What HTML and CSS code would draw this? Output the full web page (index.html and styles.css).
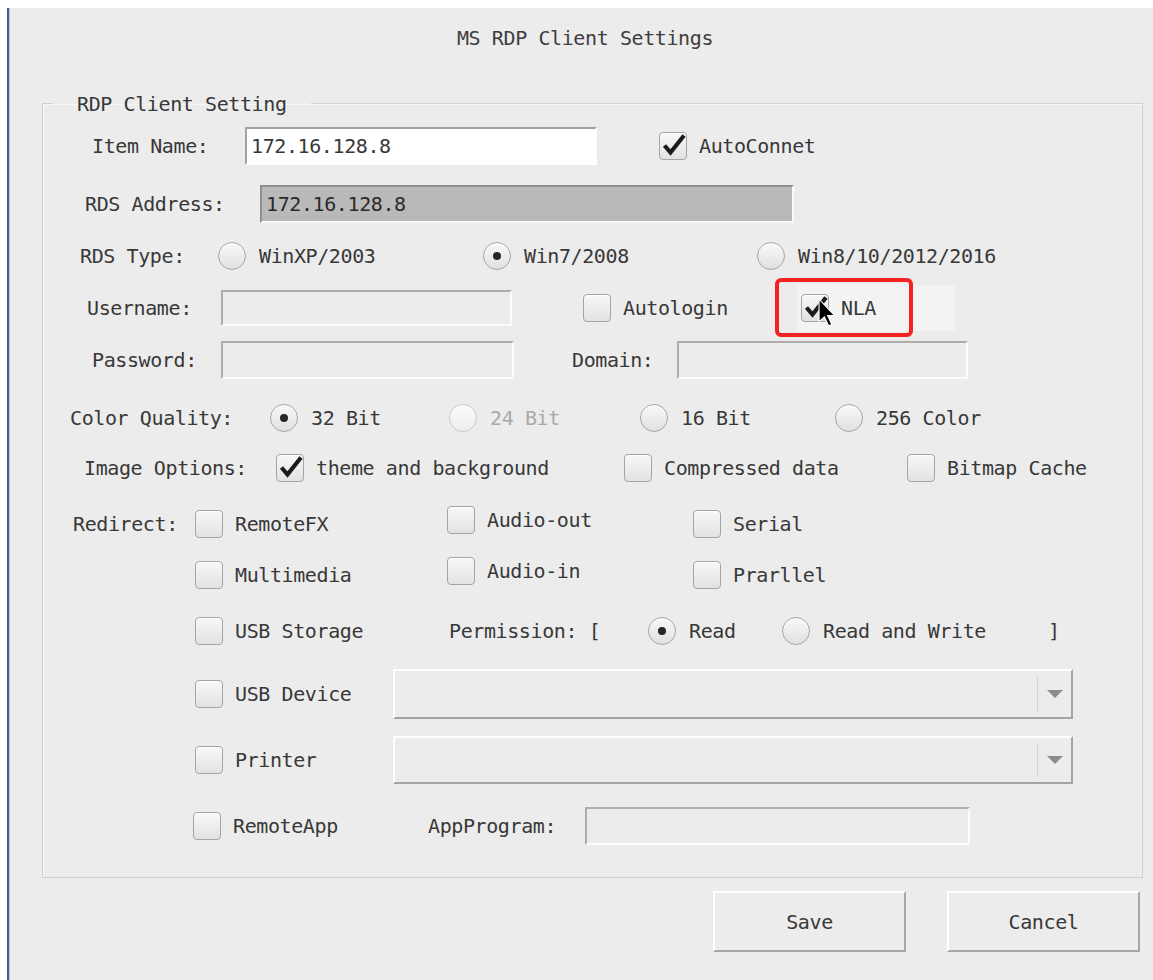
FILE: index.html
```html
<!DOCTYPE html>
<html lang="en">
<head>
<meta charset="utf-8">
<title>MS RDP Client Settings</title>
<link rel="stylesheet" href="styles.css">
</head>
<body>
<div class="window">
  <div class="title">MS RDP Client Settings</div>

  <fieldset class="group">
    <legend>RDP Client Setting</legend>
    <div class="form">

      <div class="row row-name">
        <span>Item Name:</span>
        <div class="entry entry-name">172.16.128.8</div>
        <label class="check"><span class="box"><svg viewBox="0 0 28 28"><path d="M5.5 13.5 L11.5 20.5 L25 3.5" /></svg></span>AutoConnet</label>
      </div>

      <div class="row row-address">
        <span>RDS Address:</span>
        <div class="entry entry-address">172.16.128.8</div>
      </div>

      <div class="row row-type">
        <span>RDS Type:</span>
        <label class="radio"><span class="dot"></span>WinXP/2003</label>
        <label class="radio"><span class="dot on"></span>Win7/2008</label>
        <label class="radio"><span class="dot"></span>Win8/10/2012/2016</label>
      </div>

      <div class="row row-user">
        <span>Username:</span>
        <div class="entry entry-plain entry-user"></div>
        <label class="check"><span class="box"></span>Autologin</label>
        <div class="nla">
          <label class="check prelight"><span class="box"><svg viewBox="0 0 28 28"><path d="M5.5 13.5 L11.5 20.5 L25 3.5" /></svg></span>NLA</label>
          <span class="mark"></span>
          <svg class="cursor" viewBox="0 0 16 27"><path d="M1 1 L1 22 L6 17.5 L10 26 L13 24.7 L9 16.3 L15.5 16.3 Z" /></svg>
        </div>
      </div>

      <div class="row row-pass">
        <span>Password:</span>
        <div class="entry entry-plain entry-pass"></div>
        <span>Domain:</span>
        <div class="entry entry-plain entry-domain"></div>
      </div>

      <div class="row row-color">
        <span>Color Quality:</span>
        <label class="radio"><span class="dot on"></span>32 Bit</label>
        <label class="radio disabled"><span class="dot"></span>24 Bit</label>
        <label class="radio"><span class="dot"></span>16 Bit</label>
        <label class="radio"><span class="dot"></span>256 Color</label>
      </div>

      <div class="row row-image">
        <span>Image Options:</span>
        <label class="check"><span class="box"><svg viewBox="0 0 28 28"><path d="M5.5 13.5 L11.5 20.5 L25 3.5" /></svg></span>theme and background</label>
        <label class="check"><span class="box"></span>Compressed data</label>
        <label class="check"><span class="box"></span>Bitmap Cache</label>
      </div>

      <div class="row row-redirect">
        <span>Redirect:</span>
        <label class="check"><span class="box"></span>RemoteFX</label>
        <label class="check lift"><span class="box"></span>Audio-out</label>
        <label class="check"><span class="box"></span>Serial</label>
      </div>

      <div class="row row-redirect-more">
        <label class="check"><span class="box"></span>Multimedia</label>
        <label class="check lift"><span class="box"></span>Audio-in</label>
        <label class="check"><span class="box"></span>Prarllel</label>
      </div>

      <div class="row row-storage">
        <label class="check"><span class="box"></span>USB Storage</label>
        <span>Permission: [</span>
        <label class="radio"><span class="dot on"></span>Read</label>
        <label class="radio"><span class="dot"></span>Read and Write</label>
        <span>]</span>
      </div>

      <div class="row row-device row-usb-device">
        <label class="check"><span class="box"></span>USB Device</label>
        <div class="combo"><span class="combo-button"><span class="arrow"></span></span></div>
      </div>

      <div class="row row-device row-printer">
        <label class="check"><span class="box"></span>Printer</label>
        <div class="combo"><span class="combo-button"><span class="arrow"></span></span></div>
      </div>

      <div class="row row-app">
        <label class="check"><span class="box"></span>RemoteApp</label>
        <span>AppProgram:</span>
        <div class="entry entry-plain entry-app"></div>
      </div>

    </div>
  </fieldset>

  <div class="actions">
    <button class="button" type="button">Save</button>
    <button class="button" type="button">Cancel</button>
  </div>
</div>
</body>
</html>
```

FILE: styles.css
```css
* {
  box-sizing: border-box;
}

html,
body {
  margin: 0;
  background: #ffffff;
}

body {
  font-family: "DejaVu Sans Mono", monospace;
  font-size: 20px;
  letter-spacing: -0.4px;
  color: #383838;
}

/* dialog frame */
.window {
  margin: 8px 0 0 7px;
  height: 972px;
  background: #ececec;
  border-left: 2px solid #3a5d9b;
  box-shadow: inset 1px 0 0 #c6c6c6;
  overflow: hidden;
}

.title {
  height: 83px;
  padding: 18px 0 0 8px;
  line-height: 24px;
  text-align: center;
  color: #3e3e3e;
}

/* group box */
.group {
  margin: 0 10px 0 33px;
  padding: 1px 0 18px;
  border: 1px solid #d0d0d0;
  box-shadow: inset 1px 1px 0 #f6f6f6;
  min-width: 0;
}

.group legend {
  margin-left: 10px;
  padding: 2px 24px 0;
  line-height: 22px;
}

.form {
  display: flex;
  flex-direction: column;
  padding: 10px 0 13px;
}

.row {
  display: grid;
  align-items: center;
  justify-items: start;
  height: 40px;
  white-space: nowrap;
}

.row-name          { padding-left: 49px;  grid-template-columns: 153px 414px auto; }
.row-address       { padding-left: 42px;  grid-template-columns: 175px auto; margin-top: 18px; }
.row-type          { padding-left: 37px;  grid-template-columns: 138px 265px 274px auto; margin-top: 12px; }
.row-user          { padding-left: 44px;  grid-template-columns: 134px 362px 192px auto; margin-top: 9px; height: 46px; }
.row-pass          { padding-left: 49px;  grid-template-columns: 129px 351px 105px auto; margin-top: 9px; }
.row-color         { padding-left: 27px;  grid-template-columns: 200px 179px 191px 195px auto; margin-top: 18px; }
.row-image         { padding-left: 41px;  grid-template-columns: 192px 348px 283px auto; margin-top: 10px; }
.row-redirect      { padding-left: 30px;  grid-template-columns: 122px 252px 246px auto; margin-top: 16px; }
.row-redirect-more { padding-left: 152px; grid-template-columns: 252px 246px auto; margin-top: 11px; }
.row-storage       { padding-left: 152px; grid-template-columns: 254px 199px 134px 266px auto; margin-top: 16px; }
.row-device        { padding-left: 152px; grid-template-columns: 198px 680px; }
.row-usb-device    { height: 50px; margin-top: 18px; }
.row-printer       { height: 48px; margin-top: 17px; }
.row-app           { padding-left: 150px; grid-template-columns: 235px 157px 385px; margin-top: 22px; }

/* text entries */
.entry {
  display: flex;
  align-items: center;
  height: 38px;
  padding-left: 4px;
  border: 2px solid;
}

.entry-name {
  width: 352px;
  background: #ffffff;
  border-color: #a2a2a2 #ffffff #ffffff #a2a2a2;
}

.entry-address {
  width: 534px;
  background: #b9b9b9;
  border-color: #8e8e8e #fafafa #fafafa #8e8e8e;
  color: #2a2a2a;
}

.entry-plain {
  background: transparent;
  border-color: #adadad #fbfbfb #fbfbfb #adadad;
}

.entry-user   { width: 291px; height: 36px; }
.entry-pass   { width: 293px; }
.entry-domain { width: 291px; }
.entry-app    { width: 385px; }

/* check boxes */
.check {
  display: inline-flex;
  align-items: center;
  gap: 12px;
}

.box {
  flex: none;
  width: 28px;
  height: 28px;
  border: 1px solid #a4a4a4;
  border-radius: 4px;
  background: linear-gradient(#f8f8f8, #e2e2e2);
  box-shadow: inset 0 1px 0 #ffffff;
}

.box svg {
  display: block;
  width: 28px;
  height: 28px;
  margin: -1px;
  overflow: visible;
}

.box path {
  fill: none;
  stroke: #1b1b1b;
  stroke-width: 4.2;
  stroke-linejoin: miter;
}

.lift {
  margin-bottom: 8px;
}

/* radio buttons */
.radio {
  display: inline-flex;
  align-items: center;
  gap: 13px;
}

.dot {
  flex: none;
  display: flex;
  align-items: center;
  justify-content: center;
  width: 28px;
  height: 28px;
  border: 1px solid #a6a6a6;
  border-radius: 50%;
  background: linear-gradient(#f9f9f9, #e0e0e0);
  box-shadow: inset 0 1px 0 #ffffff;
}

.dot.on::after {
  content: "";
  width: 8px;
  height: 8px;
  border-radius: 50%;
  background: #262626;
}

.radio.disabled {
  color: #a9a9a9;
}

.radio.disabled .dot {
  border-color: #c9c9c9;
  background: linear-gradient(#fbfbfb, #eeeeee);
}

/* NLA option, hovered, with highlight frame */
.nla {
  position: relative;
}

.prelight {
  width: 158px;
  height: 46px;
  margin-left: 22px;
  padding-left: 4px;
  background: #f3f3f3;
}

.mark {
  position: absolute;
  left: 0;
  top: -7px;
  width: 138px;
  height: 59px;
  border: 4px solid #f42323;
  border-radius: 6px;
}

.cursor {
  position: absolute;
  left: 43px;
  top: 13px;
  width: 17px;
  height: 29px;
}

.cursor path {
  fill: #000000;
  stroke: #ffffff;
  stroke-width: 1;
}

/* drop-down lists */
.combo {
  display: flex;
  justify-content: flex-end;
  width: 680px;
  height: 100%;
  border: 2px solid;
  border-color: #ffffff #a4a4a4 #a4a4a4 #ffffff;
}

.combo-button {
  display: flex;
  align-items: center;
  justify-content: center;
  width: 34px;
  margin: 5px 0;
  border-left: 1px solid #d4d4d4;
}

.arrow {
  width: 0;
  height: 0;
  border-left: 8px solid transparent;
  border-right: 8px solid transparent;
  border-top: 8px solid #8c8c8c;
}

/* dialog buttons */
.actions {
  display: flex;
  justify-content: flex-end;
  gap: 41px;
  margin-top: 13px;
  padding-right: 13px;
}

.button {
  width: 193px;
  height: 61px;
  padding: 0;
  border: 2px solid;
  border-color: #ffffff #a7a7a7 #a7a7a7 #ffffff;
  background: #ececec;
  font: inherit;
  letter-spacing: inherit;
  color: #383838;
}
```
